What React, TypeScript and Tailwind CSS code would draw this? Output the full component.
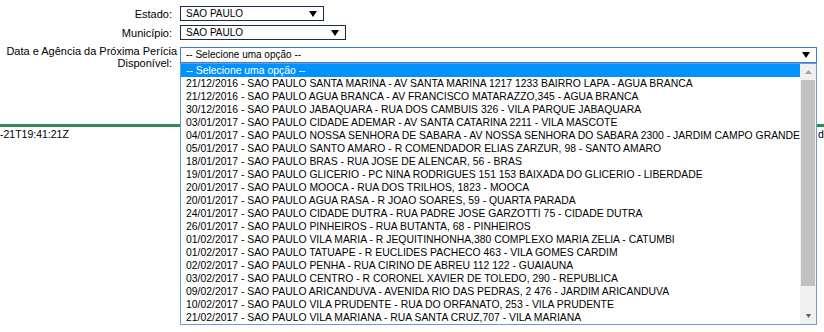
import React from "react";

const options = [
  "21/12/2016 - SAO PAULO SANTA MARINA - AV SANTA MARINA 1217 1233 BAIRRO LAPA - AGUA BRANCA",
  "21/12/2016 - SAO PAULO AGUA BRANCA - AV FRANCISCO MATARAZZO,345 - AGUA BRANCA",
  "30/12/2016 - SAO PAULO JABAQUARA - RUA DOS CAMBUIS 326 - VILA PARQUE JABAQUARA",
  "03/01/2017 - SAO PAULO CIDADE ADEMAR - AV SANTA CATARINA 2211 - VILA MASCOTE",
  "04/01/2017 - SAO PAULO NOSSA SENHORA DE SABARA - AV NOSSA SENHORA DO SABARA 2300 - JARDIM CAMPO GRANDE",
  "05/01/2017 - SAO PAULO SANTO AMARO - R COMENDADOR ELIAS ZARZUR, 98 - SANTO AMARO",
  "18/01/2017 - SAO PAULO BRAS - RUA JOSE DE ALENCAR, 56 - BRAS",
  "19/01/2017 - SAO PAULO GLICERIO - PC NINA RODRIGUES 151 153 BAIXADA DO GLICERIO - LIBERDADE",
  "20/01/2017 - SAO PAULO MOOCA - RUA DOS TRILHOS, 1823 - MOOCA",
  "20/01/2017 - SAO PAULO AGUA RASA - R JOAO SOARES, 59 - QUARTA PARADA",
  "24/01/2017 - SAO PAULO CIDADE DUTRA - RUA PADRE JOSE GARZOTTI 75 - CIDADE DUTRA",
  "26/01/2017 - SAO PAULO PINHEIROS - RUA BUTANTA, 68 - PINHEIROS",
  "01/02/2017 - SAO PAULO VILA MARIA - R JEQUITINHONHA,380 COMPLEXO MARIA ZELIA - CATUMBI",
  "01/02/2017 - SAO PAULO TATUAPE - R EUCLIDES PACHECO 463 - VILA GOMES CARDIM",
  "02/02/2017 - SAO PAULO PENHA - RUA CIRINO DE ABREU 112 122 - GUAIAUNA",
  "03/02/2017 - SAO PAULO CENTRO - R CORONEL XAVIER DE TOLEDO, 290 - REPUBLICA",
  "09/02/2017 - SAO PAULO ARICANDUVA - AVENIDA RIO DAS PEDRAS, 2 476 - JARDIM ARICANDUVA",
  "10/02/2017 - SAO PAULO VILA PRUDENTE - RUA DO ORFANATO, 253 - VILA PRUDENTE",
  "21/02/2017 - SAO PAULO VILA MARIANA - RUA SANTA CRUZ,707 - VILA MARIANA",
];

function Arrow({ color = "#000", w = 8, h = 6 }: { color?: string; w?: number; h?: number }) {
  return (
    <svg width={w} height={h} viewBox="0 0 8 6" className="shrink-0">
      <polygon points="0,0 8,0 4,6" fill={color} />
    </svg>
  );
}

function UpArrow({ color }: { color: string }) {
  return (
    <svg width={7} height={4} viewBox="0 0 7 4">
      <polygon points="0,4 7,4 3.5,0" fill={color} />
    </svg>
  );
}

export default function App() {
  return (
    <div className="relative w-[824px] h-[332px] bg-white overflow-hidden text-black font-['Liberation_Sans',Arial,sans-serif]">
      <div className="flex flex-col pt-[6px]">
        <div className="flex items-center h-[15px]">
          <div className="w-[172px] text-right text-[11px] leading-[12px]">Estado:</div>
          <div className="ml-[8px] w-[144px] h-[15px] border border-[#1c2b4a] flex items-center justify-between pl-[5px] pr-[6px] text-[10px] leading-[12px]">
            <span>SAO PAULO</span>
            <Arrow />
          </div>
        </div>
        <div className="flex items-center h-[15px] mt-[4px]">
          <div className="w-[172px] text-right text-[11px] leading-[12px]">Município:</div>
          <div className="ml-[8px] w-[166px] h-[15px] border border-[#1c2b4a] flex items-center justify-between pl-[5px] pr-[6px] text-[10px] leading-[12px]">
            <span>SAO PAULO</span>
            <Arrow />
          </div>
        </div>
        <div className="flex items-start mt-[5px]">
          <div className="w-[177px] flex flex-col items-end text-[11px] leading-[12px]">
            <span className="whitespace-nowrap">Data e Agência da Próxima Perícia</span>
            <span className="mr-[5px]">Disponível:</span>
          </div>
          <div className="ml-[3px] mt-[2px] w-[637px] h-[16px] border border-[#3c7fd1] flex items-center justify-between pl-[5px] pr-[6px] text-[10px] leading-[12px]">
            <span>-- Selecione uma opção --</span>
            <Arrow />
          </div>
        </div>
      </div>

      <div className="mt-[55px] h-[3px] bg-[#2e8b57]" />
      <div className="flex whitespace-nowrap overflow-hidden text-[10.5px] leading-[12px] mt-[1px]">
        <span>-21T19:41:21Z</span>
        <span className="ml-[749px]">de</span>
      </div>

      <div className="absolute left-[180px] top-[63px] w-[637px] h-[262px] border border-[#6f9ad6] bg-white flex">
        <div className="flex-1 flex flex-col overflow-hidden text-[10.4px] whitespace-nowrap">
          <div className="h-[13px] leading-[13px] pl-[5px] bg-[#0092ff] text-white">-- Selecione uma opção --</div>
          {options.map((o, i) => (
            <div key={i} className="h-[13px] leading-[13px] pl-[5px]">
              {o}
            </div>
          ))}
        </div>
        <div className="w-[16px] bg-[#f0f0f0] flex flex-col items-center">
          <div className="h-[16px] flex items-center justify-center">
            <UpArrow color="#a3a3a3" />
          </div>
          <div className="w-[14px] h-[206px] bg-[#c1c1c1]" />
          <div className="flex-1" />
          <div className="h-[16px] flex items-center justify-center">
            <Arrow color="#606060" w={7} h={4} />
          </div>
        </div>
      </div>
    </div>
  );
}
